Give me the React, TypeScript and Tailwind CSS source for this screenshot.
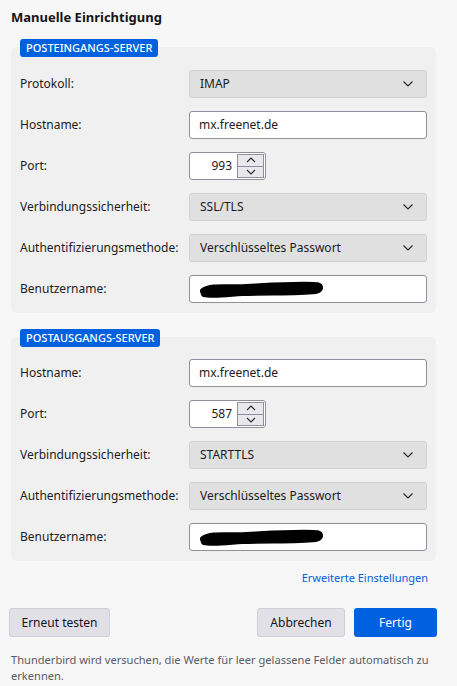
import React from "react";

const font = { fontFamily: '"Noto Sans", "Open Sans", sans-serif' };

function Chevron() {
  return (
    <svg width="12" height="8" viewBox="0 0 12 8" className="text-[#2b2b2b]">
      <path d="M1.5 1.5 L6 6 L10.5 1.5" fill="none" stroke="currentColor" strokeWidth="1.2" />
    </svg>
  );
}

function SelectBox({ value }: { value: string }) {
  return (
    <div className="flex h-[28px] w-[238px] items-center justify-between rounded-[3px] border border-[#d2d2d2] bg-[#e0e0e0] pl-[10px] pr-[12px] text-[12px] text-[#1c1b22]">
      <span>{value}</span>
      <Chevron />
    </div>
  );
}

function TextBox({ value, scribble }: { value?: string; scribble?: boolean }) {
  return (
    <div className="flex h-[28px] w-[238px] items-center rounded-[3px] border border-[#8f8f9d] bg-white px-[7px] text-[12px] text-[#1c1b22]">
      {scribble ? (
        <svg width="130" height="20" viewBox="0 0 130 20">
          <path
            d="M6 12 C14 6 30 9 50 8 C70 7 95 5 118 6 C124 6 125 10 119 12 C100 14 70 13 45 14 C30 15 15 17 7 15 Z"
            fill="#000"
            stroke="#000"
            strokeWidth="6"
            strokeLinejoin="round"
          />
        </svg>
      ) : (
        <span className="pl-[2px]">{value}</span>
      )}
    </div>
  );
}

function PortBox({ value }: { value: string }) {
  return (
    <div className="flex h-[28px] w-[77px] items-center rounded-[3px] border border-[#8f8f9d] bg-white pr-[1px]">
      <span className="flex-1 pr-[5px] text-right text-[12px] text-[#1c1b22]">{value}</span>
      <div className="flex h-[24px] w-[27px] flex-col border border-[#8f8f9d] bg-[#e9e9ed]">
        <div className="flex flex-1 items-center justify-center border-b border-[#8f8f9d]">
          <svg width="10" height="6" viewBox="0 0 10 6">
            <path d="M1 5 L5 1 L9 5" fill="none" stroke="#2b2b2b" strokeWidth="1.1" />
          </svg>
        </div>
        <div className="flex flex-1 items-center justify-center">
          <svg width="10" height="6" viewBox="0 0 10 6">
            <path d="M1 1 L5 5 L9 1" fill="none" stroke="#2b2b2b" strokeWidth="1.1" />
          </svg>
        </div>
      </div>
    </div>
  );
}

function Row({ label, children }: { label: string; children: React.ReactNode }) {
  return (
    <div className="flex h-[28px] items-center">
      <div className="w-[169px] text-[12px] text-[#1c1b22]">{label}</div>
      {children}
    </div>
  );
}

function Section({ title, children, top, bottom }: { title: string; children: React.ReactNode; top: string; bottom: string }) {
  return (
    <div className="flex flex-col">
      <div className="relative z-10 ml-[9px] self-start rounded-[3px] bg-[#0061e0] px-[6px] text-[11px] font-medium leading-[18px] text-white">
        {title}
      </div>
      <div className={`-mt-[10px] flex flex-col gap-[13px] rounded-[5px] bg-[#f0f0f0] px-[9px] ${top} ${bottom}`}>{children}</div>
    </div>
  );
}

export default function App() {
  return (
    <div style={font} className="h-[686px] w-[457px] overflow-hidden bg-[#f7f7f7] pl-[11px] pr-[21px]">
      <div className="pt-[8px] text-[13px] font-bold leading-[18px] text-[#15141a]">Manuelle Einrichtigung</div>
      <div className="mt-[13px]">
        <Section title="POSTEINGANGS-SERVER" top="pt-[23px]" bottom="pb-[10px]">
          <Row label="Protokoll:">
            <SelectBox value="IMAP" />
          </Row>
          <Row label="Hostname:">
            <TextBox value="mx.freenet.de" />
          </Row>
          <Row label="Port:">
            <PortBox value="993" />
          </Row>
          <Row label="Verbindungssicherheit:">
            <SelectBox value="SSL/TLS" />
          </Row>
          <Row label="Authentifizierungsmethode:">
            <SelectBox value="Verschlüsseltes Passwort" />
          </Row>
          <Row label="Benutzername:">
            <TextBox scribble />
          </Row>
        </Section>
      </div>
      <div className="mt-[16px]">
        <Section title="POSTAUSGANGS-SERVER" top="pt-[22px]" bottom="pb-[10px]">
          <Row label="Hostname:">
            <TextBox value="mx.freenet.de" />
          </Row>
          <Row label="Port:">
            <PortBox value="587" />
          </Row>
          <Row label="Verbindungssicherheit:">
            <SelectBox value="STARTTLS" />
          </Row>
          <Row label="Authentifizierungsmethode:">
            <SelectBox value="Verschlüsseltes Passwort" />
          </Row>
          <Row label="Benutzername:">
            <TextBox scribble />
          </Row>
        </Section>
      </div>
      <div className="mt-[9px] flex justify-end pr-[8px] text-[11px] leading-[16px] text-[#0061e0]">Erweiterte Einstellungen</div>
      <div className="mt-[22px] flex items-center -ml-[2px] -mr-[20px] pr-[19px]">
        <button className="h-[29px] w-[101px] rounded-[3px] border border-[#cfcfd8] bg-[#e0e0e6] text-[12px] text-[#15141a]">
          Erneut testen
        </button>
        <div className="flex-1" />
        <button className="h-[29px] w-[88px] rounded-[3px] border border-[#cfcfd8] bg-[#e0e0e6] text-[12px] text-[#15141a]">
          Abbrechen
        </button>
        <button className="ml-[9px] h-[29px] w-[83px] rounded-[3px] bg-[#0061e0] text-[12px] text-white">Fertig</button>
      </div>
      <div className="mt-[15px] -mr-[20px] text-[11.1px] leading-[16px] text-[#5b5b66]">
        Thunderbird wird versuchen, die Werte für leer gelassene Felder automatisch zu erkennen.
      </div>
    </div>
  );
}
